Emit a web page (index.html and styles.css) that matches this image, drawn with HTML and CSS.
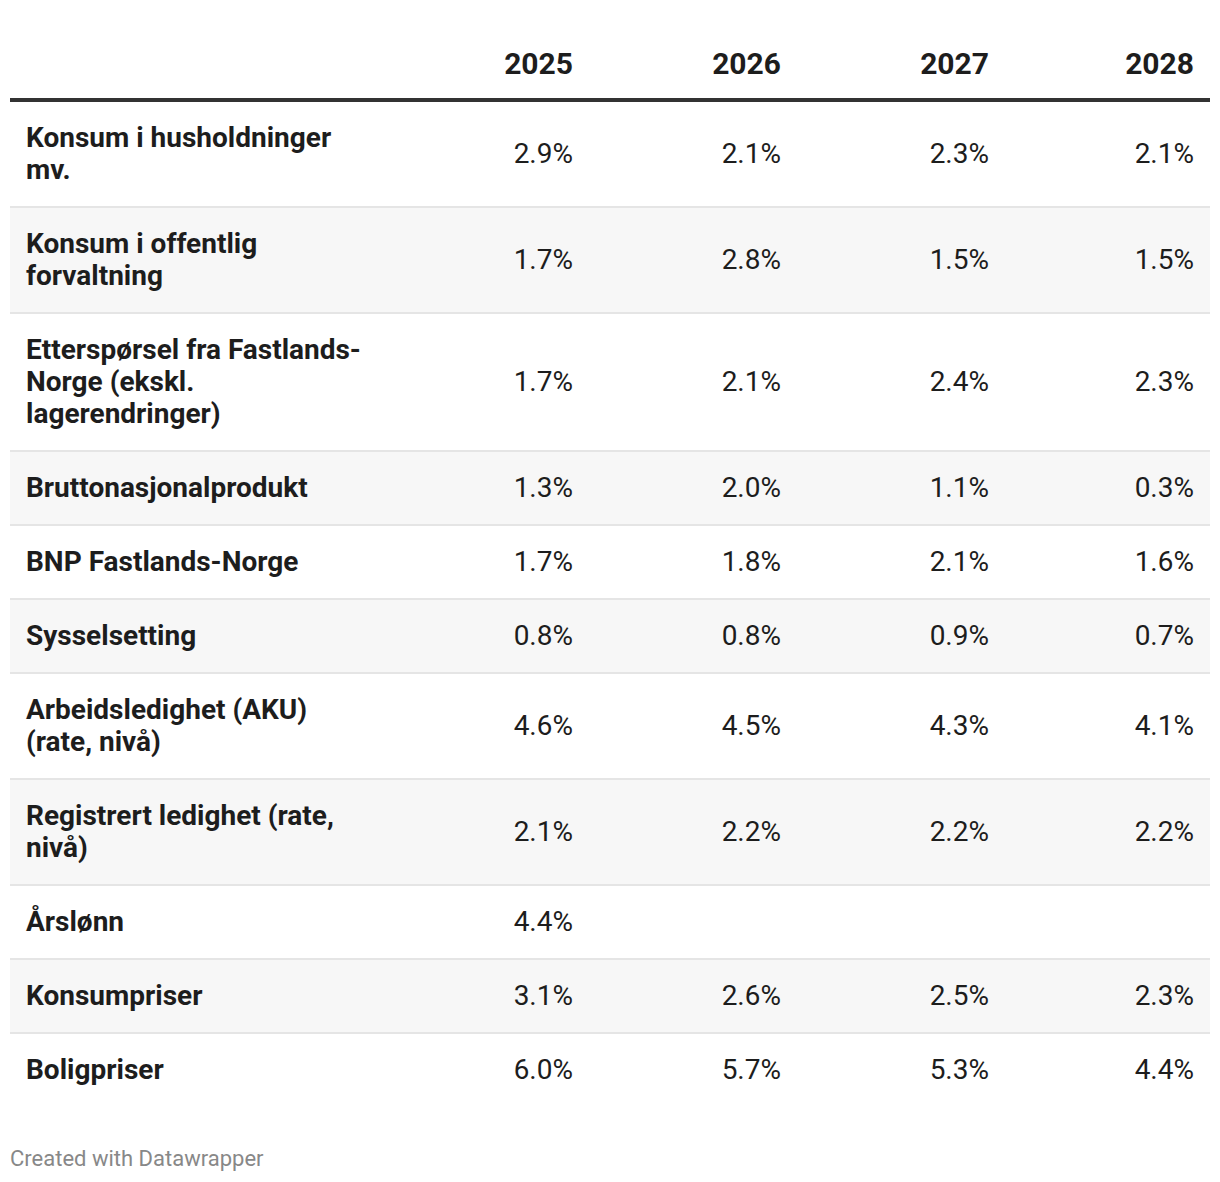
FILE: index.html
```html
<!DOCTYPE html>
<html lang="no">
<head>
<meta charset="utf-8">
<title>Tabell</title>
<link rel="stylesheet" href="styles.css">
</head>
<body>
<div class="chart">
  <table class="data">
    <colgroup>
      <col class="c-label">
      <col class="c-2025"><col class="c-2026"><col class="c-2027"><col class="c-2028">
    </colgroup>
    <thead>
      <tr><th class="lbl"></th><th>2025</th><th>2026</th><th>2027</th><th>2028</th></tr>
    </thead>
    <tbody>
      <tr><td class="lbl">Konsum i husholdninger mv.</td><td>2.9%</td><td>2.1%</td><td>2.3%</td><td>2.1%</td></tr>
      <tr><td class="lbl">Konsum i offentlig forvaltning</td><td>1.7%</td><td>2.8%</td><td>1.5%</td><td>1.5%</td></tr>
      <tr><td class="lbl">Etterspørsel fra Fastlands-Norge (ekskl. lagerendringer)</td><td>1.7%</td><td>2.1%</td><td>2.4%</td><td>2.3%</td></tr>
      <tr><td class="lbl">Bruttonasjonalprodukt</td><td>1.3%</td><td>2.0%</td><td>1.1%</td><td>0.3%</td></tr>
      <tr><td class="lbl">BNP Fastlands-Norge</td><td>1.7%</td><td>1.8%</td><td>2.1%</td><td>1.6%</td></tr>
      <tr><td class="lbl">Sysselsetting</td><td>0.8%</td><td>0.8%</td><td>0.9%</td><td>0.7%</td></tr>
      <tr><td class="lbl">Arbeidsledighet (AKU) (rate, nivå)</td><td>4.6%</td><td>4.5%</td><td>4.3%</td><td>4.1%</td></tr>
      <tr><td class="lbl">Registrert ledighet (rate, nivå)</td><td>2.1%</td><td>2.2%</td><td>2.2%</td><td>2.2%</td></tr>
      <tr><td class="lbl">Årslønn</td><td>4.4%</td><td></td><td></td><td></td></tr>
      <tr><td class="lbl">Konsumpriser</td><td>3.1%</td><td>2.6%</td><td>2.5%</td><td>2.3%</td></tr>
      <tr><td class="lbl">Boligpriser</td><td>6.0%</td><td>5.7%</td><td>5.3%</td><td>4.4%</td></tr>
    </tbody>
  </table>
  <div class="footer">Created with Datawrapper</div>
</div>
</body>
</html>
```
FILE: styles.css
```css
html, body {
  margin: 0;
  padding: 0;
  background: #ffffff;
}

body {
  font-family: Roboto, "Liberation Sans", sans-serif;
  color: #1d1d1d;
}

.chart {
  padding: 28px 10px 0 10px;
}

.data {
  width: 1200px;
  table-layout: fixed;
  border-collapse: collapse;
  font-size: 28px;
  line-height: 32px;
  font-variant-numeric: tabular-nums;
}

.c-label { width: 372px; }
.c-2025 { width: 207px; }
.c-2026 { width: 208px; }
.c-2027 { width: 208px; }
.c-2028 { width: 205px; }

.data th {
  font-size: 30px;
  font-weight: 700;
  text-align: right;
  padding: 20px 16px 18px 16px;
  border-bottom: 4px solid #333333;
  vertical-align: bottom;
}

.data td {
  text-align: right;
  padding: 20px 16px;
  border-bottom: 2px solid #e5e5e5;
  vertical-align: middle;
}

.data td.lbl,
.data th.lbl {
  text-align: left;
  font-weight: 700;
}

.data tbody tr:nth-child(even) td {
  background: #f7f7f7;
}

.data tbody tr:last-child td {
  border-bottom: none;
}

.footer {
  margin-top: 41px;
  font-size: 22px;
  line-height: 24px;
  color: #888888;
}
```
